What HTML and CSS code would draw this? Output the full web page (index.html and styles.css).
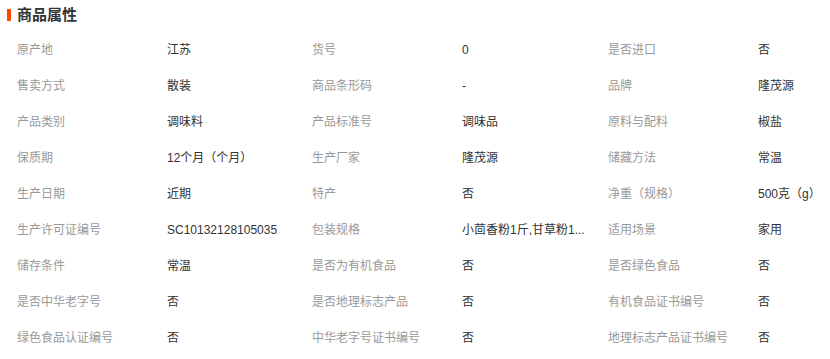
FILE: index.html
```html
<!DOCTYPE html>
<html lang="zh">
<head>
<meta charset="utf-8">
<title>商品属性</title>
<link rel="stylesheet" href="styles.css">
</head>
<body>
<div class="attrs">
  <div class="attrs-head"><span class="bar"></span><h2 class="title">商品属性</h2></div>
  <ul class="attr-grid">
    <li class="k">原产地</li><li class="v">江苏</li>
    <li class="k">货号</li><li class="v">0</li>
    <li class="k">是否进口</li><li class="v">否</li>

    <li class="k">售卖方式</li><li class="v">散装</li>
    <li class="k">商品条形码</li><li class="v">-</li>
    <li class="k">品牌</li><li class="v">隆茂源</li>

    <li class="k">产品类别</li><li class="v">调味料</li>
    <li class="k">产品标准号</li><li class="v">调味品</li>
    <li class="k">原料与配料</li><li class="v">椒盐</li>

    <li class="k">保质期</li><li class="v">12个月（个月）</li>
    <li class="k">生产厂家</li><li class="v">隆茂源</li>
    <li class="k">储藏方法</li><li class="v">常温</li>

    <li class="k">生产日期</li><li class="v">近期</li>
    <li class="k">特产</li><li class="v">否</li>
    <li class="k">净重（规格）</li><li class="v">500克（g）</li>

    <li class="k">生产许可证编号</li><li class="v">SC10132128105035</li>
    <li class="k">包装规格</li><li class="v" title="小茴香粉1斤,甘草粉1斤,花椒粉1斤">小茴香粉1斤,甘草粉1...</li>
    <li class="k">适用场景</li><li class="v">家用</li>

    <li class="k">储存条件</li><li class="v">常温</li>
    <li class="k">是否为有机食品</li><li class="v">否</li>
    <li class="k">是否绿色食品</li><li class="v">否</li>

    <li class="k">是否中华老字号</li><li class="v">否</li>
    <li class="k">是否地理标志产品</li><li class="v">否</li>
    <li class="k">有机食品证书编号</li><li class="v">否</li>

    <li class="k">绿色食品认证编号</li><li class="v">否</li>
    <li class="k">中华老字号证书编号</li><li class="v">否</li>
    <li class="k">地理标志产品证书编号</li><li class="v">否</li>
  </ul>
</div>
</body>
</html>
```
FILE: styles.css
```css
html, body {
  margin: 0;
  padding: 0;
  background: #fff;
  overflow: hidden;
}
body {
  font-family: "Liberation Sans", "Noto Sans CJK SC", sans-serif;
  font-size: 12px;
  color: #333;
}
.attrs {
  width: 100%;
}
.attrs-head {
  display: flex;
  align-items: center;
  height: 29px;
  padding-left: 7px;
}
.bar {
  width: 4px;
  height: 12px;
  background: #ff4400;
  margin-right: 6px;
}
.title {
  margin: 0;
  font-size: 15px;
  font-weight: bold;
  color: #333;
  line-height: 20px;
}
.attr-grid {
  list-style: none;
  margin: 3px 0 0;
  padding: 0 0 0 17px;
  display: grid;
  grid-template-columns: 150px 145px 150px 146px 150px 1fr;
  grid-auto-rows: 36px;
}
.attr-grid li {
  line-height: 36px;
  white-space: nowrap;
  overflow: hidden;
}
.k {
  color: #999;
}
.v {
  color: #333;
  max-width: 128px;
}
```
